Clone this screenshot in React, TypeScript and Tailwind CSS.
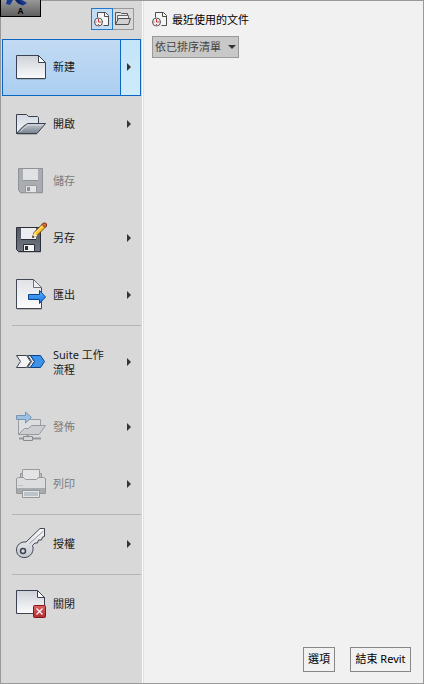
import type { ReactNode } from "react";

type MenuEntry = {
  label: string;
  icon: ReactNode;
  arrow?: boolean;
  disabled?: boolean;
  active?: boolean;
  tall?: boolean;
};

const iconClass = "h-8 w-8 shrink-0";

function Gradient({ id, from, to }: { id: string; from: string; to: string }) {
  return (
    <linearGradient id={id} x1="0" y1="0" x2="0" y2="1">
      <stop offset="0" stopColor={from} />
      <stop offset="1" stopColor={to} />
    </linearGradient>
  );
}

function NewIcon() {
  return (
    <svg viewBox="0 0 32 32" className={iconClass}>
      <defs>
        <Gradient id="new-page" from="#cdd1d8" to="#fbfbfc" />
      </defs>
      <path d="M2 28.5h28" stroke="#000" strokeOpacity=".15" />
      <path d="M1.5 4.5h22l7 7v16h-29z" fill="url(#new-page)" stroke="#3a4150" />
      <path d="M23.5 4.5v7h7z" fill="#fff" stroke="#3a4150" />
    </svg>
  );
}

function OpenIcon() {
  return (
    <svg viewBox="0 0 32 32" className={iconClass}>
      <defs>
        <Gradient id="open-back" from="#d3d8e2" to="#f4f5f8" />
        <Gradient id="open-front" from="#c3c9d0" to="#77828e" />
      </defs>
      <path d="M2 26.5h20" stroke="#000" strokeOpacity=".2" />
      <path d="M1.5 25.5v-19h10l2 2h9l1 1v7l-22 9z" fill="url(#open-back)" stroke="#3a4150" />
      <path d="M1.5 25.5l6-6.500 5-3.500h18l-8.500 10z" fill="url(#open-front)" stroke="#3a4150" />
      <path d="M5.500 23.500l3-3 4.500-3.500h15" fill="none" stroke="#d5dae0" />
    </svg>
  );
}

function SaveIcon() {
  return (
    <svg viewBox="0 0 32 32" className={iconClass}>
      <path d="M5 28.5h23" stroke="#000" strokeOpacity=".08" />
      <path d="M3.5 3.5h24v24h-22l-2-2z" fill="#a9acb0" stroke="#8e9195" />
      <path d="M8 4h15v11.500h-15z" fill="#e0e1e2" />
      <path d="M8 15.5h15" stroke="#909397" />
      <path d="M10.5 20.5h11v7h-11z" fill="#e3e4e5" stroke="#989b9f" />
      <path d="M12 22h3v4h-3z" fill="#8d9094" />
    </svg>
  );
}

function SaveAsIcon() {
  return (
    <svg viewBox="0 1 32 32" className={iconClass}>
      <defs>
        <Gradient id="disk" from="#535962" to="#707780" />
      </defs>
      <path d="M3 31.5h23" stroke="#000" strokeOpacity=".15" />
      <path d="M1.5 6.5h24v24h-22l-2-2z" fill="url(#disk)" stroke="#292e38" />
      <path d="M6 7h15v11.500h-15z" fill="#eceef1" />
      <path d="M6 18.5h15" stroke="#292e38" />
      <path d="M8.5 23.5h11v7h-11z" fill="#f4f4f5" stroke="#292e38" />
      <path d="M10 25h3v4h-3z" fill="#282d36" />
      <path d="M17.500 16.500l1.500-5 9-9 3 3-9 9z" fill="#ffc62d" stroke="#704b16" />
      <path d="M20 12l8-8" stroke="#fff09b" />
      <path d="M17.500 16.500l1.500-5 3.500 3.500z" fill="#fbe9bd" />
      <path d="M17 17l1-2.500 1.500 1.500z" fill="#333" />
      <path d="M27 3.500l1.500-1.500h2l1 1v2l-1.500 1.500z" fill="#cf6a3b" stroke="#7e3419" />
    </svg>
  );
}

function ExportIcon() {
  return (
    <svg viewBox="0 1 32 32" className={iconClass}>
      <defs>
        <Gradient id="export-page" from="#e0e2e7" to="#fdfdfd" />
        <Gradient id="export-arrow" from="#5db1ff" to="#1673dc" />
      </defs>
      <path d="M2 31.5h25" stroke="#000" strokeOpacity=".18" />
      <path d="M1.5 1.5h17l8 8v21h-25z" fill="url(#export-page)" stroke="#414753" />
      <path d="M18.5 1.5v8h8z" fill="#eee" stroke="#6b707a" />
      <path d="M13.5 16.5h11v-4l6 6.500-6 6.500v-4h-11z" fill="url(#export-arrow)" stroke="#0c438e" />
    </svg>
  );
}

function WorkflowIcon() {
  return (
    <svg viewBox="0 0 32 32" className={iconClass}>
      <path d="M1.5 9.5h10l4 6-4 6h-10l4-6z" fill="#f2f3f4" stroke="#3d434d" />
      <path d="M12.5 9.5h3l4 6-4 6h-3l4-6z" fill="#e1e3e6" stroke="#3d434d" />
      <path d="M15.5 9.5h10l4 6-4 6h-10l4-6z" fill="#3c93ea" stroke="#0c438e" />
    </svg>
  );
}

function PublishIcon() {
  return (
    <svg viewBox="0 0 32 32" className={iconClass}>
      <path d="M3.5 23.5v-15h22v7l-10 8z" fill="#dcdddf" stroke="#999da2" />
      <path d="M3.5 23.5l6-6h4l3-3h14l-6.500 9z" fill="#cbcdd0" stroke="#969a9f" />
      <path d="M12.5 24v2M4 27.500h22" stroke="#93979b" strokeWidth="2" />
      <path d="M8.5 25.5h9v4h-9z" fill="#d3d5d7" stroke="#888c91" />
      <path d="M1.5 4.5h9v-3.500l6 5.500-6 5.500v-3.500h-9z" fill="#9cc0df" stroke="#7597b4" />
    </svg>
  );
}

function PrintIcon() {
  return (
    <svg viewBox="0 1 32 32" className={iconClass}>
      <path d="M5.5 6.5h21v7h-21z" fill="#bcbec0" stroke="#96999c" />
      <path d="M1.5 11.5l2-1h25l2 1v15h-29z" fill="#dcddde" stroke="#96999c" />
      <path d="M2 21h28v5h-28z" fill="#a8abae" />
      <path d="M7.5 2.5h17v7l-3 3h-11l-3-3z" fill="#e4e4e5" stroke="#999b9e" />
      <path d="M3 18.5h5" stroke="#bfc0c1" />
      <path d="M7.5 23.5h17v7h-17z" fill="#e3e5e7" stroke="#94979a" />
      <path d="M9 25h14v4h-14z" fill="#bcc3c9" />
    </svg>
  );
}

function KeyIcon() {
  return (
    <svg viewBox="0 1 32 32" className={iconClass}>
      <defs>
        <Gradient id="key" from="#fafafb" to="#c3c8d0" />
      </defs>
      <path
        d="M25 1.500h4.500v8l-2 .5-1 3h-3l-1 3h-2.500l-2.500 2.500c2 5.500-1.500 11.500-7.500 12-5 .4-8.500-3-8.500-7.500 0-5 4-8.500 9.500-8z"
        fill="url(#key)"
        stroke="#3e4551"
      />
      <path d="M14.500 16.500L28.500 4" stroke="#8f959e" />
      <circle cx="8" cy="24" r="2.500" fill="#d8d8d8" stroke="#3e4551" strokeWidth="1.500" />
    </svg>
  );
}

function CloseIcon() {
  return (
    <svg viewBox="0 0 32 32" className={iconClass}>
      <defs>
        <Gradient id="close-page" from="#cdd1d8" to="#fbfbfc" />
        <Gradient id="close-badge" from="#dc6262" to="#b32b2f" />
      </defs>
      <path d="M1.5 2.5h21l7 7v16h-28z" fill="url(#close-page)" stroke="#3a4150" />
      <path d="M22.5 2.5v7h7z" fill="#fff" stroke="#3a4150" />
      <rect x="18.5" y="17.5" width="12" height="12" rx="1" fill="url(#close-badge)" stroke="#86181c" />
      <path d="M21.5 20.5l6 6M27.5 20.5l-6 6" stroke="#fff" strokeWidth="1.2" />
    </svg>
  );
}

function RecentIcon() {
  return (
    <svg viewBox="0 0 16 16" className="h-4 w-4 shrink-0">
      <path d="M3.5 6.5v-5h8l3 3v10h-5" fill="#f5f5f5" stroke="#4b4b4b" />
      <path d="M10.5 1.5v4h4" fill="none" stroke="#4b4b4b" />
      <circle cx="4.5" cy="11" r="4" fill="#f4f1f1" stroke="#555" />
      <path d="M4.5 8v1M4.500 13v1M1.500 11h1M6.500 11h1" stroke="#a33" />
      <path d="M4.5 9v2h2" fill="none" stroke="#c93434" />
    </svg>
  );
}

function FolderIcon() {
  return (
    <svg viewBox="0 0 16 16" className="h-4 w-4 shrink-0">
      <path d="M.5 13.5v-12h5l1 1h6v4" fill="#e4e4e4" stroke="#555" />
      <path d="M2.5 9.500v-5h11v3" fill="#efefef" stroke="#666" />
      <path d="M.5 13.5l3-6h12l-2 6z" fill="#d0d0d0" stroke="#4f4f4f" />
    </svg>
  );
}

function AppButton() {
  return (
    <button
      aria-label="A"
      className="absolute -top-px -left-px flex h-[17px] w-[41px] items-end justify-center overflow-hidden border-x border-b border-black bg-linear-to-b from-[#999] to-[#606060]"
    >
      <svg viewBox="0 0 39 16" className="absolute inset-0 h-4 w-[39px]">
        <path d="M6 0h6l-3 5-4-1z" fill="#173a94" />
        <path d="M14 0h7l5 3-4 2.500-5-2z" fill="#173a94" />
        <path d="M14 0h4l4 5-5-2z" fill="#0d2361" />
      </svg>
      <span className="relative text-[8px] leading-[10px] font-bold text-black">A</span>
    </button>
  );
}

function Arrow() {
  return (
    <svg viewBox="0 0 4 8" className="h-2 w-1">
      <path d="M0 0l4 4-4 4z" fill="#333" />
    </svg>
  );
}

const groups: MenuEntry[][] = [
  [
    { label: "新建", icon: <NewIcon />, arrow: true, active: true },
    { label: "開啟", icon: <OpenIcon />, arrow: true },
    { label: "儲存", icon: <SaveIcon />, disabled: true },
    { label: "另存", icon: <SaveAsIcon />, arrow: true },
    { label: "匯出", icon: <ExportIcon />, arrow: true },
  ],
  [
    { label: "Suite 工作流程", icon: <WorkflowIcon />, arrow: true, tall: true },
    { label: "發佈", icon: <PublishIcon />, arrow: true, disabled: true },
    { label: "列印", icon: <PrintIcon />, arrow: true, disabled: true },
  ],
  [{ label: "授權", icon: <KeyIcon />, arrow: true }],
  [{ label: "關閉", icon: <CloseIcon /> }],
];

function MenuRow({ entry }: { entry: MenuEntry }) {
  return (
    <li
      className={`flex border ${entry.tall ? "h-[72px]" : "h-[57px]"} ${
        entry.active
          ? "border-[#0a66c2] bg-linear-to-b from-[#c3dbf3] to-[#abcef0]"
          : "border-transparent"
      }`}
    >
      <button
        disabled={entry.disabled}
        className={`flex min-w-0 flex-1 items-center gap-1.5 pb-0.5 pl-3 text-left ${
          entry.disabled ? "text-[#7b7b7b]" : "text-[#1a1a1a]"
        }`}
      >
        {entry.icon}
        <span className="w-14">{entry.label}</span>
      </button>
      {entry.arrow && (
        <button
          aria-label={entry.label}
          className={`flex w-5 items-center border-l pb-0.5 pl-1.5 ${
            entry.active
              ? "border-[#0a66c2] bg-linear-to-b from-[#c4e5f8] to-[#cdebfa]"
              : "border-transparent"
          }`}
        >
          <Arrow />
        </button>
      )}
    </li>
  );
}

export default function App() {
  return (
    <div className="relative flex min-h-screen border border-[#999] bg-[#f1f1f1] font-['Noto_Sans','Noto_Sans_CJK_TC',sans-serif] text-[11px] leading-[15px] text-black">
      <aside className="w-[142px] shrink-0 border-r border-[#fafafa] bg-[#d8d8d8] pl-px">
        <div className="flex h-[38px] justify-end pt-[7px] pr-2">
          <button
            aria-label="最近使用的文件"
            className="flex h-[22px] w-[22px] items-center justify-center border border-[#2378c8] bg-[#c3dcf4]"
          >
            <RecentIcon />
          </button>
          <button
            aria-label="開啟"
            className="flex h-[22px] w-[21px] items-center justify-center border border-l-0 border-[#999]"
          >
            <FolderIcon />
          </button>
        </div>
        <nav className="pr-px">
          {groups.map((group, i) => (
            <div key={i}>
              {i > 0 && <hr className="my-px ml-2.5 border-[#b4b4b4]" />}
              <ul>
                {group.map((entry) => (
                  <MenuRow key={entry.label} entry={entry} />
                ))}
              </ul>
            </div>
          ))}
        </nav>
      </aside>

      <main className="flex min-w-0 flex-1 flex-col justify-between border-l border-[#e2e2e2]">
        <section className="pt-2.5 pl-2">
          <h1 className="flex h-4 items-center gap-1">
            <RecentIcon />
            最近使用的文件
          </h1>
          <div className="relative mt-[9px] w-[87px]">
            <select
              aria-label="最近使用的文件"
              className="block h-[22px] w-full appearance-none border border-[#999] bg-[#c8c8c8] pb-0.5 pl-0.5 text-[#444] outline-none"
            >
              <option>依已排序清單</option>
            </select>
            <svg viewBox="0 0 8 4" className="pointer-events-none absolute top-[9px] right-[3px] h-1 w-2">
              <path d="M0 0h8l-4 4z" fill="#333" />
            </svg>
          </div>
        </section>
        <footer className="flex justify-end gap-[15px] pr-3 pb-[11px]">
          <button className="h-[25px] w-8 border border-[#888] pb-0.5">選項</button>
          <button className="h-[25px] w-[61px] border border-[#888] pb-0.5 whitespace-nowrap">結束 Revit</button>
        </footer>
      </main>

      <AppButton />
    </div>
  );
}
